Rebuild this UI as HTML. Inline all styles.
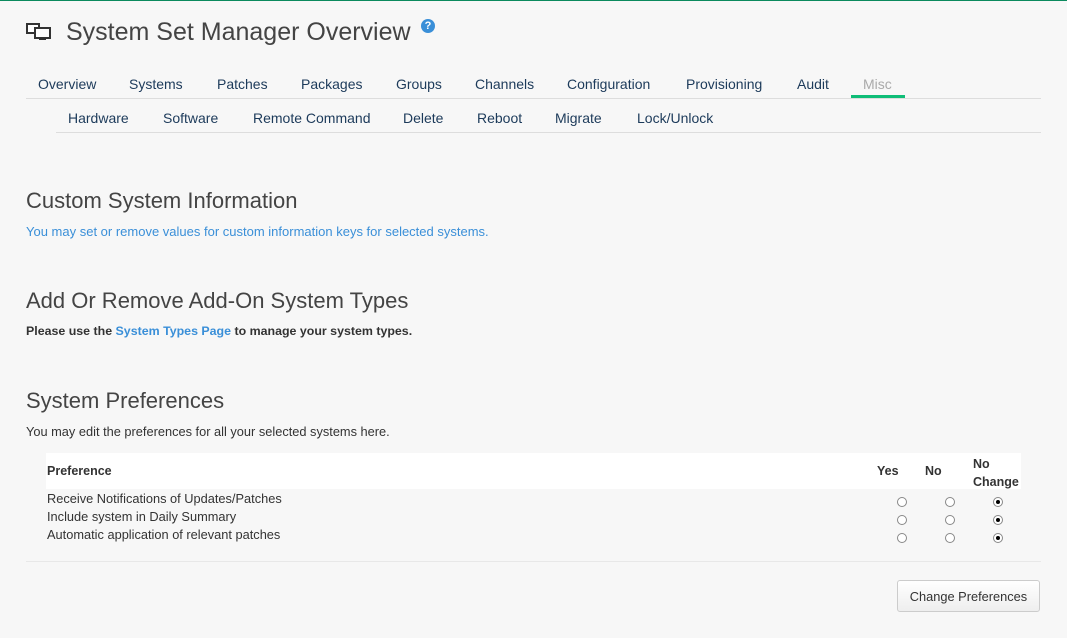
<!DOCTYPE html>
<html><head><style>
body{margin:0;background:#f7f7f7;font-family:"Liberation Sans",sans-serif;width:1067px;height:638px;position:relative;overflow:hidden;color:#333}
.a{position:absolute;white-space:nowrap}
.nav{font-size:14px;color:#1c3a5a}
.h2{font-size:22px;color:#444}
.r{position:absolute;width:8px;height:8px;border:1px solid #888;border-radius:50%;background:#fff}
.r.c::after{content:"";position:absolute;left:2px;top:2px;width:4px;height:4px;border-radius:50%;background:#000}
</style></head><body>
<div class="a" style="left:0;top:0;width:1067px;height:1px;background:#0b8a5e"></div>
<svg class="a" style="left:26px;top:23px" width="26" height="18" viewBox="0 0 26 18"><rect x="1" y="1" width="12" height="9" fill="#fff" stroke="#333" stroke-width="2"/><rect x="9" y="5" width="15" height="10" fill="#fff" stroke="#333" stroke-width="2"/><rect x="13" y="15" width="7" height="2" fill="#333"/></svg>
<div class="a" style="left:66px;top:18px;font-size:25px;color:#444">System Set Manager Overview</div>
<div class="a" style="left:421px;top:19px;width:14px;height:14px;border-radius:50%;background:#3a8fd8;color:#fff;font-size:11px;font-weight:bold;text-align:center;line-height:14px">?</div>
<div class="nav">
<div class="a" style="left:38px;top:76px">Overview</div>
<div class="a" style="left:129px;top:76px">Systems</div>
<div class="a" style="left:217px;top:76px">Patches</div>
<div class="a" style="left:301px;top:76px">Packages</div>
<div class="a" style="left:396px;top:76px">Groups</div>
<div class="a" style="left:475px;top:76px">Channels</div>
<div class="a" style="left:567px;top:76px">Configuration</div>
<div class="a" style="left:686px;top:76px">Provisioning</div>
<div class="a" style="left:797px;top:76px">Audit</div>
<div class="a" style="left:863px;top:76px;color:#aaa">Misc</div>
<div class="a" style="left:68px;top:110px">Hardware</div>
<div class="a" style="left:163px;top:110px">Software</div>
<div class="a" style="left:253px;top:110px">Remote Command</div>
<div class="a" style="left:403px;top:110px">Delete</div>
<div class="a" style="left:477px;top:110px">Reboot</div>
<div class="a" style="left:555px;top:110px">Migrate</div>
<div class="a" style="left:637px;top:110px">Lock/Unlock</div>
</div>
<div class="a" style="left:26px;top:98px;width:1015px;height:1px;background:#ddd"></div>
<div class="a" style="left:851px;top:95px;width:54px;height:3px;background:#0fbd77"></div>
<div class="a" style="left:56px;top:132px;width:985px;height:1px;background:#ddd"></div>
<div class="a h2" style="left:26px;top:188px">Custom System Information</div>
<div class="a" style="left:26px;top:224px;font-size:13px;color:#3a8fd8">You may set or remove values for custom information keys for selected systems.</div>
<div class="a h2" style="left:26px;top:288px">Add Or Remove Add-On System Types</div>
<div class="a" style="left:26px;top:324px;font-size:12.4px;font-weight:bold;color:#333">Please use the <span style="color:#3a8fd8">System Types Page</span> to manage your system types.</div>
<div class="a h2" style="left:26px;top:388px">System Preferences</div>
<div class="a" style="left:26px;top:424px;font-size:12.8px">You may edit the preferences for all your selected systems here.</div>
<div class="a" style="left:46px;top:453px;width:975px;height:36px;background:#fff"></div>
<div class="a" style="left:47px;top:464px;font-size:12.5px;font-weight:bold">Preference</div>
<div class="a" style="left:877px;top:464px;font-size:12.5px;font-weight:bold">Yes</div>
<div class="a" style="left:925px;top:464px;font-size:12.5px;font-weight:bold">No</div>
<div class="a" style="left:973px;top:455px;font-size:12.5px;font-weight:bold;line-height:18px">No<br>Change</div>
<div class="a" style="left:47px;top:491px;font-size:12.8px">Receive Notifications of Updates/Patches</div>
<div class="a" style="left:47px;top:509px;font-size:12.8px">Include system in Daily Summary</div>
<div class="a" style="left:47px;top:527px;font-size:12.8px">Automatic application of relevant patches</div>
<div class="r" style="left:897px;top:497px"></div><div class="r" style="left:945px;top:497px"></div><div class="r c" style="left:993px;top:497px"></div>
<div class="r" style="left:897px;top:515px"></div><div class="r" style="left:945px;top:515px"></div><div class="r c" style="left:993px;top:515px"></div>
<div class="r" style="left:897px;top:533px"></div><div class="r" style="left:945px;top:533px"></div><div class="r c" style="left:993px;top:533px"></div>
<div class="a" style="left:26px;top:561px;width:1015px;height:1px;background:#e8e8e8"></div>
<div class="a" style="left:897px;top:580px;width:141px;height:30px;border:1px solid #ccc;border-radius:3px;background:linear-gradient(#fff,#eee);font-size:12.8px;color:#333;text-align:center;line-height:31px">Change Preferences</div>
</body></html>
